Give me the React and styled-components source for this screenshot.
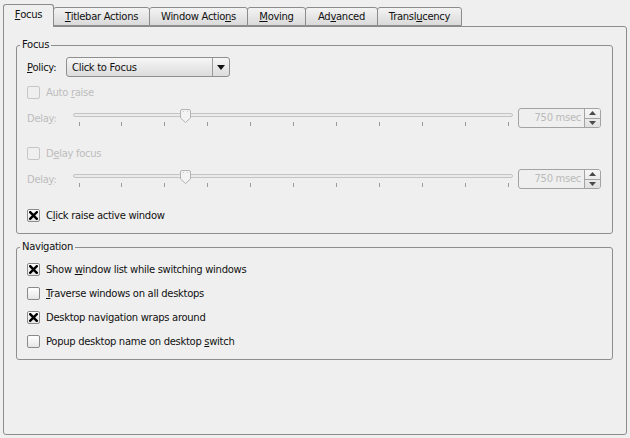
import React from 'react';
import styled, { createGlobalStyle } from 'styled-components';

const GlobalStyle = createGlobalStyle`
  html, body {
    margin: 0;
    padding: 0;
    background: #efefef;
  }
  body {
    font-family: 'DejaVu Sans', 'Liberation Sans', sans-serif;
    font-size: 10px;
    letter-spacing: -0.3px;
    color: #111;
  }
`;

const Window = styled.div`
  width: 630px;
  height: 438px;
  box-sizing: border-box;
  padding: 3px;
  display: flex;
  flex-direction: column;
`;

// tab strip
const TabBar = styled.div`
  display: flex;
  align-items: flex-end;
  height: 23px;
  position: relative;
  z-index: 2;
`;

const Tab = styled.div`
  box-sizing: border-box;
  width: ${p => p.$w}px;
  height: ${p => (p.$active ? 23 : 19)}px;
  margin-left: ${p => (p.$first ? 0 : -1)}px;
  margin-bottom: ${p => (p.$active ? -1 : 0)}px;
  border: 1px solid #8c8c8c;
  border-bottom: ${p => (p.$active ? 'none' : '1px solid #8c8c8c')};
  border-radius: 3px 3px 0 0;
  background: ${p => (p.$active ? '#efefef' : 'linear-gradient(#f3f3f3, #dadada)')};
  display: flex;
  align-items: center;
  justify-content: center;
  padding-bottom: ${p => (p.$active ? 3 : 1)}px;
  z-index: ${p => (p.$active ? 3 : 1)};
  color: #111;
  white-space: nowrap;
`;

const Pane = styled.div`
  flex: 1;
  box-sizing: border-box;
  border: 1px solid #8c8c8c;
  border-radius: 0 3px 3px 3px;
  padding: 11px 13px 0 12px;
  display: flex;
  flex-direction: column;
`;

const Group = styled.fieldset`
  margin: 0;
  margin-top: ${p => p.$mt || 0}px;
  padding: 0 11px 11px 10px;
  border: 1px solid #8e8e8e;
  border-radius: 3px;
  min-width: 0;
  display: flex;
  flex-direction: column;
`;

const Legend = styled.legend`
  padding: 0 2px;
  margin-left: -7px;
  line-height: 14px;
  color: #111;
`;

const Row = styled.div`
  display: flex;
  align-items: center;
  height: ${p => p.$h || 14}px;
  margin-top: ${p => p.$mt || 0}px;
  color: ${p => (p.$disabled ? '#bdbdbd' : '#111')};
  white-space: nowrap;
`;

const Mn = styled.span`
  text-decoration: underline;
  text-underline-offset: 1px;
`;

const FieldLabel = styled.span`
  width: ${p => p.$w}px;
  flex: none;
`;

// checkbox
const Box = styled.span`
  box-sizing: border-box;
  width: 13px;
  height: 13px;
  flex: none;
  border: 1px solid ${p => (p.$disabled ? '#c6c6c6' : '#8a8a8a')};
  border-radius: 2px;
  background: ${p => (p.$disabled ? '#efefef' : 'linear-gradient(#ffffff, #e6e6e6)')};
  margin-right: 6px;
  display: flex;
  align-items: center;
  justify-content: center;
`;

const Check = ({ checked, disabled, children }) => (
  <Row $disabled={disabled}>
    <Box $disabled={disabled}>
      {checked && (
        <svg width="9" height="9" viewBox="0 0 9 9">
          <path d="M1.2 1.2 L7.8 7.8 M7.8 1.2 L1.2 7.8" stroke="#000" strokeWidth="2.4" strokeLinecap="square" />
        </svg>
      )}
    </Box>
    <span>{children}</span>
  </Row>
);

// combo box
const Combo = styled.div`
  box-sizing: border-box;
  width: 164px;
  height: 20px;
  border: 1px solid #8f8f8f;
  border-radius: 3px;
  background: linear-gradient(#f6f6f6, #dcdcdc);
  display: flex;
  align-items: center;
  color: #111;
`;

const ComboText = styled.span`
  flex: 1;
  padding-left: 5px;
`;

const ComboArrow = styled.span`
  width: 16px;
  height: 100%;
  border-left: 1px solid #9a9a9a;
  display: flex;
  align-items: center;
  justify-content: center;
`;

// spin box
const Spin = styled.div`
  box-sizing: border-box;
  width: 85px;
  height: 20px;
  margin-left: 5px;
  border: 1px solid #a3a3a3;
  border-radius: 3px;
  display: flex;
  background: #efefef;
`;

const SpinText = styled.span`
  flex: 1;
  text-align: right;
  padding-right: 3px;
  line-height: 18px;
  color: #bababa;
  border-right: 1px solid #a3a3a3;
`;

const SpinButtons = styled.span`
  width: 15px;
  display: flex;
  flex-direction: column;
  background: linear-gradient(#f6f6f6, #e0e0e0);
  border-radius: 0 2px 2px 0;
`;

const SpinButton = styled.span`
  flex: 1;
  display: flex;
  align-items: center;
  justify-content: center;
  border-top: ${p => (p.$down ? '1px solid #a3a3a3' : 'none')};
`;

const SliderWrap = styled.div`
  width: 440px;
  height: 20px;
  flex: none;
`;

const Slider = ({ pos }) => {
  const ticks = Array.from({ length: 11 }, (_, i) => 5.5 + i * 42.9);
  const hx = pos;
  return (
    <SliderWrap>
      <svg width="440" height="20" viewBox="0 0 440 20">
        <rect x="0.5" y="5.5" width="439" height="3" rx="1.5" fill="#ebebeb" stroke="#c4c4c4" />
        {ticks.map(t => (
          <line key={t} x1={Math.round(t) + 0.5} y1="14" x2={Math.round(t) + 0.5} y2="18" stroke="#9a9a9a" />
        ))}
        <path
          d={`M${hx + 0.5} 3 Q${hx + 0.5} 1.5 ${hx + 2} 1.5 H${hx + 9} Q${hx + 10.5} 1.5 ${hx + 10.5} 3 V10 L${hx + 5.5} 14.5 L${hx + 0.5} 10 Z`}
          fill="#f3f3f3"
          stroke="#b3b3b3"
        />
        <rect x={hx + 3} y="3" width="1" height="1" fill="#c8c8c8" />
        <rect x={hx + 7} y="3" width="1" height="1" fill="#c8c8c8" />
      </svg>
    </SliderWrap>
  );
};

const DelayRow = ({ mt }) => (
  <Row $h={20} $mt={mt} $disabled>
    <FieldLabel $w={46}>Dela<Mn>y</Mn>:</FieldLabel>
    <Slider pos={107} />
    <Spin>
      <SpinText>750 msec</SpinText>
      <SpinButtons>
        <SpinButton>
          <svg width="7" height="4" viewBox="0 0 7 4"><path d="M0 4 L3.5 0 L7 4 Z" fill="#4a4a4a" /></svg>
        </SpinButton>
        <SpinButton $down>
          <svg width="7" height="4" viewBox="0 0 7 4"><path d="M0 0 L7 0 L3.5 4 Z" fill="#4a4a4a" /></svg>
        </SpinButton>
      </SpinButtons>
    </Spin>
  </Row>
);

const tabs = [
  { w: 51, label: <><Mn>F</Mn>ocus</>, active: true },
  { w: 97, label: <><Mn>T</Mn>itlebar Actions</> },
  { w: 99, label: <>Window Actio<Mn>n</Mn>s</> },
  { w: 59, label: <><Mn>M</Mn>oving</> },
  { w: 73, label: <>Ad<Mn>v</Mn>anced</> },
  { w: 85, label: <>Transl<Mn>u</Mn>cency</> },
];

const Spaced = styled.div`
  margin-top: ${p => p.$mt}px;
`;

export default function App() {
  return (
    <>
      <GlobalStyle />
      <Window>
        <TabBar>
          {tabs.map((t, i) => (
            <Tab key={i} $w={t.w} $active={t.active} $first={i === 0}>
              {t.label}
            </Tab>
          ))}
        </TabBar>
        <Pane>
          <Group>
            <Legend>Focus</Legend>
            <Row $h={20} $mt={5}>
              <FieldLabel $w={39}><Mn>P</Mn>olicy:</FieldLabel>
              <Combo>
                <ComboText>Click to Focus</ComboText>
                <ComboArrow>
                  <svg width="8" height="5" viewBox="0 0 8 5"><path d="M0 0 H8 L4 5 Z" fill="#111" /></svg>
                </ComboArrow>
              </Combo>
            </Row>
            <Spaced $mt={8}>
              <Check disabled>Auto <Mn>r</Mn>aise</Check>
            </Spaced>
            <DelayRow mt={9} />
            <Spaced $mt={18}>
              <Check disabled>D<Mn>e</Mn>lay focus</Check>
            </Spaced>
            <DelayRow mt={9} />
            <Spaced $mt={19}>
              <Check checked>C<Mn>l</Mn>ick raise active window</Check>
            </Spaced>
          </Group>
          <Group $mt={6}>
            <Legend>Navigation</Legend>
            <Spaced $mt={8}>
              <Check checked>Show <Mn>w</Mn>indow list while switching windows</Check>
            </Spaced>
            <Spaced $mt={10}>
              <Check><Mn>T</Mn>raverse windows on all desktops</Check>
            </Spaced>
            <Spaced $mt={10}>
              <Check checked>Desktop navi<Mn>g</Mn>ation wraps around</Check>
            </Spaced>
            <Spaced $mt={10}>
              <Check>Popup desktop name on desktop <Mn>s</Mn>witch</Check>
            </Spaced>
          </Group>
        </Pane>
      </Window>
    </>
  );
}
